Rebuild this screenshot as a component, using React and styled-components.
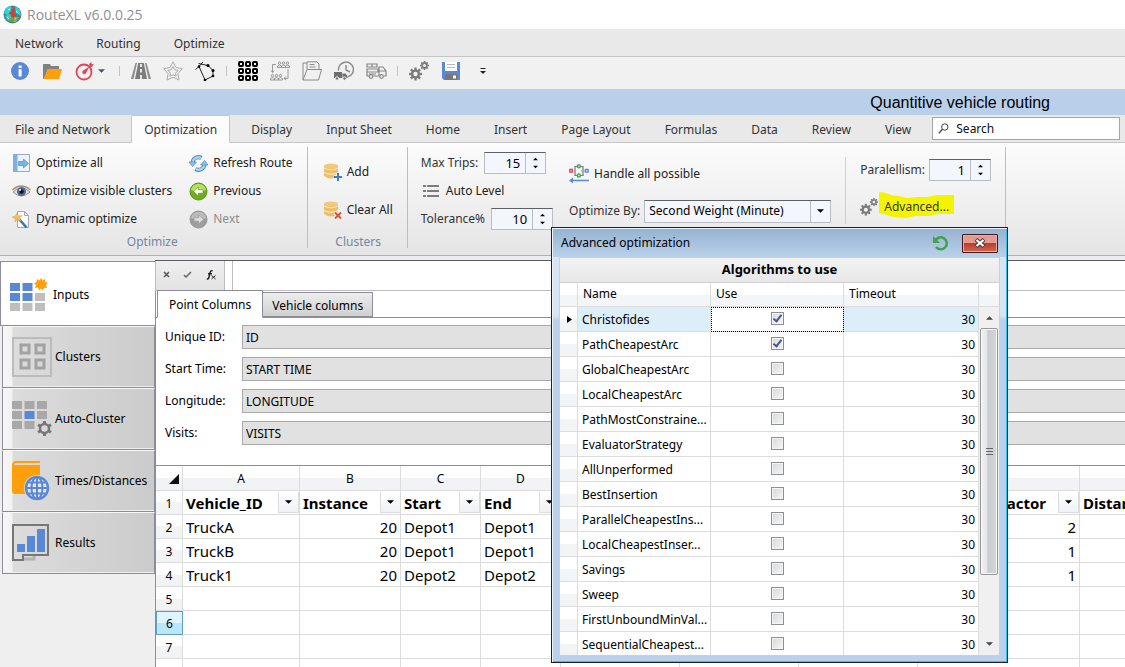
import React from "react";
import styled, { createGlobalStyle, css } from "styled-components";

const uiFont = `"Noto Sans", "DejaVu Sans", sans-serif`;
const line = "#8b8e98";

const GlobalStyle = createGlobalStyle`
  *, *::before, *::after { box-sizing: border-box; }
  html, body, #root { height: 100%; }
  body { margin: 0; background: #efefef; font: 12px/16px ${uiFont}; color: #000; overflow: hidden; }
  button, input, select { font: inherit; color: inherit; margin: 0; }
  button { background: none; border: 0; padding: 0; cursor: default; }
  svg { display: block; flex: none; }
`;

/* ---------- window frame ---------- */
const Window = styled.div`
  position: relative;
  display: flex;
  flex-direction: column;
  height: 100vh;
  overflow: hidden;
`;
const TitleBar = styled.header`
  display: flex;
  align-items: center;
  gap: 5px;
  flex: none;
  height: 29px;
  padding-left: 3px;
  background: #fff;
`;
const AppTitle = styled.h1`
  margin: 0;
  font: 14px/20px "Open Sans", "Noto Sans", sans-serif;
  color: #8f8f8f;
`;
const MenuBar = styled.nav`
  display: flex;
  align-items: center;
  gap: 33px;
  flex: none;
  height: 28px;
  padding: 2px 0 0 15px;
  background: #e9e9e9;
  border-bottom: 1px solid #c6c6c6;
  color: #333;
`;
const QuickBar = styled.div`
  display: flex;
  align-items: center;
  flex: none;
  height: 32px;
  padding-left: 4px;
  padding-bottom: 4px;
  background: #f1f1f1;
`;
const QuickButton = styled.button`
  display: flex;
  align-items: center;
  justify-content: ${(p) => (p.$wide ? "flex-start" : "center")};
  gap: 3px;
  width: ${(p) => (p.$wide ? 46 : 32)}px;
  height: 28px;
  padding-left: ${(p) => (p.$wide ? 7 : 0)}px;
`;
const QuickDivider = styled.i`
  width: 1px;
  height: 10px;
  margin: 0 5px;
  background: #c2c2c2;
`;
const Banner = styled.div`
  flex: none;
  display: flex;
  justify-content: flex-end;
  height: 26px;
  padding-right: 75px;
  background: #b9cfea;
  font: 16px/27px "Liberation Sans", Arial, sans-serif;
`;

/* ---------- ribbon ---------- */
const TabStrip = styled.nav`
  display: flex;
  align-items: stretch;
  gap: 8px;
  flex: none;
  height: 28px;
  padding: 0 5px 0 2px;
  background: #e9e9e9;
  border-bottom: 1px solid #c6c6c6;
`;
const RibbonTab = styled.button`
  flex: none;
  height: 28px;
  padding: 2px 12px 0;
  border: 1px solid transparent;
  white-space: nowrap;
  color: #333;
  ${(p) => p.$active && css`
    background: #fcfcfc;
    border-color: #c6c6c6;
    border-bottom-color: #fcfcfc;
    border-radius: 2px 2px 0 0;
  `}
`;
const SearchBox = styled.label`
  display: flex;
  align-items: center;
  gap: 7px;
  flex: 1 1 0;
  min-width: 0;
  height: 23px;
  margin-top: 2px;
  padding-left: 5px;
  background: #fff;
  border: 1px solid #a5a5a5;
  input {
    flex: 1 1 0;
    width: 0;
    min-width: 0;
    padding: 0;
    border: 0;
    outline: 0;
    background: none;
  }
  input::placeholder { color: #111; opacity: 1; }
`;
const Ribbon = styled.section`
  display: flex;
  flex: none;
  height: 113px;
  padding-top: 4px;
  background: linear-gradient(#fcfcfc, #e5e5e5);
  border-bottom: 1px solid #b0b0b0;
`;
const RibbonEdge = styled.div`
  flex: none;
  height: 4px;
  background: #ececec;
`;
const Group = styled.div`
  display: flex;
  flex-direction: column;
  height: 101px;
  padding: 2px 14px 0 ${(p) => p.$left || 12}px;
  border-right: 1px solid #bdbdbd;
`;
const GroupBody = styled.div`
  display: flex;
  flex: 1;
  gap: 17px;
`;
const GroupCaption = styled.div`
  height: 15px;
  text-align: center;
  line-height: 17px;
  color: #7486a4;
`;
const Stack = styled.div`
  display: flex;
  flex-direction: column;
  align-items: flex-start;
  gap: ${(p) => p.$gap || 0}px;
  padding-top: ${(p) => p.$top || 0}px;
`;
const Command = styled.button`
  display: flex;
  align-items: center;
  gap: 5px;
  height: 28px;
  color: #222;
  white-space: nowrap;
  &:disabled { color: #8b8b8b; }
`;
const Settings = styled.div`
  display: flex;
  align-items: flex-start;
  height: 101px;
  padding: 2px 14px 0 13px;
  border-right: 1px solid #bdbdbd;
`;
const SettingsSpace = styled.i`
  width: 16px;
`;
const SettingsDivider = styled.i`
  width: 1px;
  height: 67px;
  margin: 8px 14px 0;
  background: #cfcfcf;
`;
const Setting = styled.div`
  display: flex;
  align-items: center;
  gap: ${(p) => p.$gap || 4}px;
  height: 28px;
  white-space: nowrap;
  color: #333;
`;
const SpinBox = styled.span`
  display: flex;
  width: 62px;
  height: 22px;
  background: #f3f6fc;
  border: 1px solid #b9bcc4;
  border-top-color: #5f6066;
  input {
    width: 41px;
    padding: 0 5px;
    border: 0;
    border-right: 1px solid #b9bcc4;
    background: none;
    text-align: right;
    color: #000;
    outline: 0;
    appearance: textfield;
    font-size: 13px;
  }
  input::-webkit-inner-spin-button { appearance: none; }
`;
const SpinButtons = styled.span`
  display: flex;
  flex-direction: column;
  align-items: center;
  justify-content: space-evenly;
  flex: 1;
`;
const ComboBox = styled.span`
  display: flex;
  position: relative;
  width: 187px;
  height: 23px;
  background: #f3f6fc;
  border: 1px solid #b9bcc4;
  border-top-color: #5f6066;
  select {
    appearance: none;
    flex: 1;
    padding: 0 24px 0 4px;
    border: 0;
    background: none;
    color: #000;
    outline: 0;
  }
`;
const ComboArrow = styled.span`
  position: absolute;
  top: 0;
  right: 0;
  bottom: 0;
  display: flex;
  align-items: center;
  justify-content: center;
  width: 20px;
  border-left: 1px solid #b9bcc4;
  pointer-events: none;
`;
const Highlight = styled.span`
  position: relative;
  padding: 0 5px;
  margin-left: -3px;
  svg { position: absolute; left: 0; top: -7px; z-index: 0; }
  b { position: relative; font-weight: 400; }
`;

/* ---------- work area ---------- */
const Body = styled.div`
  display: flex;
  flex: 1;
  min-height: 0;
  background: #efefef;
`;
const SideBar = styled.nav`
  flex: none;
  display: flex;
  flex-direction: column;
  width: 155px;
  padding-top: 1px;
`;
const SideTab = styled.button`
  display: flex;
  align-items: center;
  gap: 3px;
  height: 62px;
  margin-left: 2px;
  padding-left: 9px;
  text-align: left;
  white-space: nowrap;
  border: 1px solid ${line};
  border-top-color: #f8f8f8;
  background: linear-gradient(90deg, #f6f6f6 0, #f2f2f2 9px, #dcdcdc 10px, #cbcbcb 100%);
  box-shadow: inset 0 -1px #eee;
  ${(p) => p.$active && css`
    height: 65px;
    margin-left: 0;
    gap: 5px;
    padding-top: 2px;
    background: #fff;
    border-color: ${line};
    border-right: 0;
    box-shadow: none;
  `}
`;
const Main = styled.main`
  display: flex;
  flex-direction: column;
  flex: 1;
  min-width: 0;
  background: #fff;
  border-top: 1px solid #5a5b62;
`;
const FormulaRow = styled.div`
  display: flex;
  flex: none;
  gap: 7px;
  height: 30px;
`;
const FormulaButtons = styled.div`
  display: flex;
  align-items: center;
  justify-content: space-around;
  width: 70px;
  padding-bottom: 2px;
  border: 1px solid #bcbcc0;
  border-top: 0;
  background: linear-gradient(#efefef, #e3e3e3);
`;
const FormulaInput = styled.input`
  flex: 1;
  border: 1px solid #bcbcc0;
  border-width: 0 0 1px 1px;
  outline: 0;
`;
const SheetTabs = styled.div`
  display: flex;
  align-items: flex-end;
  flex: none;
  height: 27px;
  padding-left: 1px;
  border-bottom: 1px solid ${line};
  border-left: 1px solid ${line};
`;
const SheetTab = styled.button`
  height: 25px;
  padding: 2px 9px 0;
  white-space: nowrap;
  border: 1px solid ${line};
  border-left: 0;
  background: linear-gradient(#ededed, #d0d0d0);
  ${(p) => p.$active && css`
    height: 28px;
    padding: 1px 11px 0;
    margin-bottom: -1px;
    border-left: 1px solid ${line};
    border-bottom-color: #fff;
    background: #fff;
  `}
`;
const FieldPanel = styled.div`
  display: flex;
  flex-direction: column;
  gap: 8px;
  flex: none;
  height: 148px;
  padding: 7px 0 0 9px;
  border-left: 1px solid ${line};
  border-bottom: 1px solid ${line};
`;
const Field = styled.label`
  display: grid;
  grid-template-columns: 77px 1fr;
  height: 24px;
  line-height: 24px;
  input {
    min-width: 0;
    height: 24px;
    padding: 1px 3px 0;
    background: #e1e1e1;
    border: 1px solid #a9a9a9;
    border-right: 0;
    outline: 0;
  }
`;
const SheetView = styled.div`
  flex: 1;
  min-height: 0;
  overflow: hidden;
  border-left: 1px solid ${line};
`;
const Sheet = styled.table`
  width: 1084px;
  table-layout: fixed;
  border-collapse: separate;
  border-spacing: 0;
  th, td {
    height: 24px;
    padding: 0 3px;
    border-right: 1px solid #dcdcdc;
    border-bottom: 1px solid #dcdcdc;
    white-space: nowrap;
    overflow: hidden;
  }
  td { font-size: 15px; line-height: 20px; }
  th { padding-top: 2px; font-weight: 400; text-align: center; background: linear-gradient(#fff 50%, #f2f3f5 50%); }
  thead th { height: 25px; }
`;
const RowHead = styled.th`
  ${(p) => p.$selected && css`
    &&& {
      background: linear-gradient(#dff4fd 50%, #b9e6fb 50%);
      border: 1px solid #5f9fb8;
    }
  `}
`;
const Cell = styled.td`
  text-align: ${(p) => (p.$number ? "right" : "left")};
`;
const FilterHead = styled.div`
  display: flex;
  align-items: center;
  justify-content: ${(p) => (p.$end ? "flex-end" : "space-between")};
  gap: 12px;
  margin-right: -3px;
  font-weight: 700;
  button {
    display: flex;
    flex: none;
    align-items: center;
    justify-content: center;
    width: 21px;
    height: 21px;
    background: linear-gradient(#fff, #f0f1f4);
    border: 1px solid #dcdcdc;
    border-top: 0;
  }
`;

/* ---------- dialog ---------- */
const Dialog = styled.section`
  position: absolute;
  left: 551px;
  top: 227px;
  display: flex;
  flex-direction: column;
  width: 457px;
  height: 436px;
  padding: 0 7px 6px 6px;
  border: 1px solid #1d2226;
  background: linear-gradient(#d6e4f4 0, #d6e4f4 88px, #b9d1ea 92px);
  box-shadow: inset 1px 1px #eaf3fb, inset -1px -1px #2cc3ea;
`;
const DialogTitle = styled.header`
  display: flex;
  align-items: center;
  flex: none;
  height: 28px;
  margin: 1px -6px 0 -5px;
  padding: 0 8px 0 8px;
  background: linear-gradient(#96b3d2, #b9d1ea);
  h2 { flex: 1; margin: 0; font-size: 12px; font-weight: 400; }
`;
const CloseButton = styled.button`
  display: flex;
  align-items: center;
  justify-content: center;
  width: 36px;
  height: 19px;
  margin-left: 14px;
  border: 1px solid #43191c;
  border-radius: 1px;
  box-shadow: inset 0 0 0 1px #e9aca2;
  background: linear-gradient(#e39c92 0 45%, #b8392a 46%, #cf6a55);
`;
const DialogBody = styled.div`
  display: flex;
  flex-direction: column;
  flex: 1;
  min-height: 0;
  margin-left: 1px;
  background: #fff;
  border: 1px solid #cfcfcf;
`;
const Caption = styled.h3`
  flex: none;
  height: 25px;
  margin: 0;
  border-bottom: 1px solid #d0d0d0;
  background: linear-gradient(#f2f2f2, #e8e8e8);
  text-align: center;
  font: 700 13px/23px ${uiFont};
`;
const ListArea = styled.div`
  display: flex;
  flex: 1;
  min-height: 0;
`;
const ListClip = styled.div`
  flex: 1;
  min-width: 0;
  overflow: hidden;
`;
const List = styled.table`
  width: 100%;
  table-layout: fixed;
  border-collapse: separate;
  border-spacing: 0;
  th, td {
    height: 25px;
    padding: 1px 3px 0 4px;
    border-right: 1px solid #dcdcdc;
    border-bottom: 1px solid #dcdcdc;
    font-weight: 400;
    text-align: left;
    white-space: nowrap;
    overflow: hidden;
  }
  th { height: 24px; padding: 0 5px 2px; background: linear-gradient(#fff 50%, #f4f5f7 50%); }
  td:first-child { padding: 0 0 0 7px; background: linear-gradient(#fff 50%, #f3f4f6 50%); }
  td:nth-child(2) { padding-right: 0; }
  td:nth-child(3) { text-align: center; padding: 0 0 1px; }
  td:last-child { text-align: right; }
`;
const AlgorithmRow = styled.tr`
  ${(p) => p.$current && css`
    td:nth-child(2), td:nth-child(4) { background: #dceef8; }
    td:nth-child(3) { outline: 1px dotted #000; outline-offset: -1px; }
  `}
`;
const Tick = styled.input`
  appearance: none;
  display: block;
  width: 13px;
  height: 13px;
  margin: 0 auto !important;
  border: 1px solid #8e8f8f;
  background: linear-gradient(135deg, #d4d7da, #f6f6f6);
  box-shadow: inset 0 0 0 1px #f4f4f4;
  &:checked::after {
    content: "";
    display: block;
    width: 5px;
    height: 9px;
    margin: 0 0 0 3px;
    border: solid #3f579b;
    border-width: 0 2px 2px 0;
    transform: rotate(38deg);
  }
`;
const ScrollBar = styled.div`
  display: flex;
  flex-direction: column;
  align-items: center;
  flex: none;
  width: 20px;
  padding-bottom: 1px;
  background: #f0f0f0;
`;
const ScrollHead = styled.div`
  flex: none;
  width: 20px;
  height: 24px;
  border-bottom: 1px solid #dcdcdc;
  background: linear-gradient(#fff 50%, #f4f5f7 50%);
`;
const ScrollButton = styled.button`
  display: flex;
  align-items: center;
  justify-content: center;
  width: 18px;
  height: 21px;
`;
const Thumb = styled.div`
  display: flex;
  align-items: center;
  justify-content: center;
  width: 18px;
  height: 247px;
  margin-bottom: auto;
  border: 1px solid #979797;
  border-radius: 2px;
  box-shadow: inset 0 0 0 1px #f6f6f6;
  background: linear-gradient(90deg, #f3f3f3, #e3e4e6 40%, #c9cbcf 41%, #d4d5d9);
`;

/* ---------- drawings ---------- */
const Svg = ({ w = 20, h = w, box, children, ...rest }) => (
  <svg width={w} height={h} viewBox={box || `0 0 ${w} ${h}`} fill="none" aria-hidden="true" {...rest}>{children}</svg>
);
const Triangle = ({ up, w = 7, color = "#000" }) => (
  <Svg w={w} h={4} box="0 0 8 4"><path d={up ? "M0 4L4 0L8 4Z" : "M0 0L4 4L8 0Z"} fill={color} /></Svg>
);
const AppIcon = () => (
  <Svg w={19}>
    <circle cx="9.5" cy="9.5" r="9" fill="#557f87" />
    <path d="M3 3L8 1L9 6L4 10L1 8ZM12 1L17 5L18 11L13 8Z" fill="#27d7dc" />
    <path d="M2 11L7 9L9 15L5 16ZM12 12L16 12L13 17L10 17Z" fill="#30d0d6" />
    <path d="M9 3L12 4L11 7L13 11L10 13L8 9L6 8L8 6Z" fill="#df3b2d" />
    <path d="M6 14L9 12L12 14L15 11L16 13L12 16L8 17Z" fill="#6ca441" />
    <path d="M11 12L14 13L12 16Z" fill="#e9b62c" />
    <path d="M5 5l2-1M13 6l2 2M4 12l2 2" stroke="#e8f6f6" />
  </Svg>
);
const InfoIcon = () => (
  <Svg w={20}><circle cx="10" cy="10" r="9" fill="#5989d6" /><path d="M8.6 4.5h3v2.4h-3zM8.6 8.3h3v7.2h-3z" fill="#fff" /></Svg>
);
const FolderIcon = () => (
  <Svg w={20}><path d="M1 18V3h7l1 2h8v3H6L2 18Z" fill="#818181" /><path d="M6 8h14l-3 10H1.500Z" fill="#ff9f0c" /></Svg>
);
const GaugeIcon = () => (
  <Svg w={20}>
    <circle cx="9" cy="11" r="7.500" stroke="#e24558" strokeWidth="1.800" />
    <path d="M14.500 5.500L10.800 12.500A2 2 0 0 1 7.800 9.800Z" fill="#e24558" />
    <path d="M14 3l2.500-2v2h2l-1.500 3h-2z" fill="#e24558" />
  </Svg>
);
const RoadIcon = () => (
  <Svg w={20}>
    <path d="M4.500 2h1.500L2.500 18H0ZM15.500 2h-1.500L17.500 18H20Z" fill="#8c8c8c" />
    <path d="M7.200 2h5.600l3.200 16H4Z" fill="#7c7c7c" />
    <path d="M10 3v3M10 8v3.500M10 14v4" stroke="#f1f1f1" strokeWidth="1.800" />
  </Svg>
);
const StarIcon = () => (
  <Svg w={20} stroke="#ababab" strokeLinejoin="round">
    <path d="M10 .8L13 6.500L19.400 7.700L15 12.400L15.900 19L10 16.200L4.100 19L5 12.400L.6 7.700L7 6.500Z" />
    <path d="M10 5.500L11.700 8.800L15.200 9.400L12.600 12L13.100 15.200L10 13.700L6.900 15.200L7.400 12L4.800 9.400L8.300 8.800Z" />
  </Svg>
);
const PolygonIcon = () => (
  <Svg w={20}>
    <path d="M.5 8.500L4 5.500L8 1M3.500 2.500L13 4.500L18 9.500L18 15L10 19L4 5.500" stroke="#222" />
    <g fill="#000"><circle cx="4" cy="5.500" r="1.300" /><circle cx="13" cy="4.500" r="1.500" /><circle cx="18" cy="9.500" r="1.500" /><circle cx="18" cy="15" r="1.300" /><circle cx="10" cy="19" r="1.300" /></g>
  </Svg>
);
const DotGridIcon = () => (
  <Svg w={20}>
    {[3, 10, 17].map((y) => [3, 10, 17].map((x) => <rect key={`${x}-${y}`} x={x - 2} y={y - 2} width="4" height="4" rx="1" stroke="#000" strokeWidth="2" />))}
  </Svg>
);
const Person = ({ x, y }) => (
  <g transform={`translate(${x} ${y})`}><circle cx="2" cy="1.600" r="1.200" /><path d="M0 6V4.500Q2 2.500 4 4.500V6Z" /></g>
);
const PeopleIcon = () => (
  <Svg w={20} stroke="#858585" strokeWidth=".8">
    <Person x={7.500} y={0.5} /><Person x={11.500} y={0.5} /><Person x={15.500} y={0.5} />
    <Person x={0.500} y={13} /><Person x={4.500} y={13} /><Person x={8.500} y={13} />
    <path d="M6 3.500H2.500v8M1 9.500l1.500 2L4 9.500M18 8v9.500H14M16 15.500L14 17.500l2 1.500" />
  </Svg>
);
const OpenFolderIcon = () => (
  <Svg w={20} stroke="#8a8a8a"><path d="M1 19V2h4V.8h10L17 3v5M1 19L5 8.500h14.500l-3 10.500ZM5 8.500V2M7.500 3.500h5M7.500 6h6" /></Svg>
);
const ClockTruckIcon = () => (
  <Svg w={20}>
    <path d="M4.500 9.500A7.500 7.500 0 1 1 14 15.800" stroke="#8c8c8c" strokeWidth="1.500" />
    <path d="M12 4v5l4 2" stroke="#8c8c8c" strokeWidth="1.400" />
    <path d="M0 11h8v6H0ZM8.500 12.500h3l2 2.500v2h-5Z" fill="#6e6e6e" />
    <circle cx="3" cy="17.500" r="1.700" fill="#6e6e6e" stroke="#f1f1f1" /><circle cx="10.500" cy="17.500" r="1.700" fill="#6e6e6e" stroke="#f1f1f1" />
  </Svg>
);
const TruckIcon = () => (
  <Svg w={21} h={18} stroke="#868686" strokeWidth="1.200">
    <path d="M1 2h5v3H1ZM6 2h5v3H6ZM1 7h11v3H1ZM1 10v4h2M7 14h6V5h4l3 4v5h-2M13 9h7M3 12h7" />
    <circle cx="5" cy="14.500" r="1.800" /><circle cx="15.500" cy="14.500" r="1.800" />
  </Svg>
);
const Cog = ({ x, y, r, color = "#7b7b7b", hole = "#f1f1f1" }) => (
  <g transform={`translate(${x} ${y})`}>
    {[0, 45, 90, 135].map((a) => <rect key={a} x={-r * 0.18} y={-r} width={r * 0.36} height={r * 2} fill={color} transform={`rotate(${a})`} />)}
    <circle r={r * 0.7} fill={color} /><circle r={r * 0.34} fill={hole} />
  </g>
);
const GearsIcon = ({ w = 20 }) => (
  <Svg w={w} box="0 0 20 20"><Cog x={6.5} y={13} r={6.5} /><Cog x={15.500} y={4.500} r={4.500} /></Svg>
);
const SaveIcon = () => (
  <Svg w={20}>
    <path d="M1 1h18v18H3l-2-2Z" fill="#5989d6" /><path d="M4 1h12v9H4Z" fill="#fff" />
    <path d="M6 3.500h8M6 6.500h8" stroke="#b8b8b8" /><path d="M4 13h12v6H4Z" fill="#777" /><path d="M12 14.500h3v3h-3Z" fill="#fff" />
  </Svg>
);
const MoreIcon = () => (<Svg w={8} h={8}><path d="M1.500 1.500h5" stroke="#222" /><path d="M1 4h6L4 7Z" fill="#222" /></Svg>);
const SearchIcon = () => (
  <Svg w={11}><circle cx="6.800" cy="4" r="3.200" stroke="#444" /><path d="M4.500 6.300L.8 10.200" stroke="#444" strokeWidth="1.300" /></Svg>
);
const OptimizeAllIcon = () => (
  <Svg w={19}><path d="M1.500 .5h16v17h-16Z" fill="#eef4fb" stroke="#94acc8" /><path d="M1 0h4.500v18H1Z" fill="#7fb0de" /><path d="M6.500 7.500h5V5l5 4.500l-5 4.500v-2.500h-5Z" fill="#75b4e4" stroke="#4785b8" strokeWidth=".6" /></Svg>
);
const EyeIcon = () => (
  <Svg w={19}><path d="M1 10Q9 2 18 10Q9 18 1 10Z" fill="#d9dfe8" stroke="#a49084" /><path d="M.5 8Q9 0 18.500 8" stroke="#a58c7c" strokeWidth="1.400" /><circle cx="9.500" cy="9.500" r="4.500" fill="#506b91" /><circle cx="9.500" cy="9.500" r="2.200" fill="#101820" /><circle cx="8" cy="8" r="1" fill="#fff" /></Svg>
);
const WandIcon = () => (
  <Svg w={19}><path d="M5.500 1.500h7l4 4v12h-11Z" fill="#fbfbfb" stroke="#a8a8a8" /><path d="M12.500 1.500v4h4" stroke="#a8a8a8" /><path d="M7 9l7.500 8.500" stroke="#3e73b5" strokeWidth="2.600" /><path d="M5 3l1.300 3L10 5.500L7.500 8L9 11L5.500 9.500L3 12V8.500L0 7l3.500-1Z" fill="#f7bd5a" stroke="#dca04a" strokeWidth=".5" /></Svg>
);
const RefreshRouteIcon = () => (
  <Svg w={19}>
    <path d="M3.500 8.500a6 6 0 0 1 9-4.500" stroke="#4b88bd" strokeWidth="4" /><path d="M3.500 8a6 6 0 0 1 8.600-4" stroke="#acd4ef" strokeWidth="2.400" />
    <path d="M15.500 10.500a6 6 0 0 1-9 4.500" stroke="#4b88bd" strokeWidth="4" /><path d="M15.500 11a6 6 0 0 1-8.600 4" stroke="#acd4ef" strokeWidth="2.400" />
    <path d="M0 8h7.500L3.500 12.500ZM11.500 11L15.500 6.500L19 11Z" fill="#93c3e6" stroke="#4b88bd" strokeWidth=".7" />
  </Svg>
);
const ArrowBall = ({ flip, a, b, edge, arrow }) => (
  <Svg w={19}>
    <circle cx="9.500" cy="9.500" r="8.500" fill={b} stroke={edge} /><path d="M2 8a7.600 7.600 0 0 1 15 0Q9 11 2 8Z" fill={a} />
    <path d="M4.500 9.500L9.500 5v2.800H14v3.400H9.500V14Z" fill={arrow} stroke={edge} strokeWidth=".6" transform={flip ? "rotate(180 9.500 9.500)" : undefined} />
  </Svg>
);
const DatabaseIcon = ({ remove }) => (
  <Svg w={18}>
    <path d="M0 3Q7 0 14 3v10Q7 18 0 13Z" fill="#eebf69" /><ellipse cx="7" cy="3" rx="7" ry="2.500" fill="#f3c978" />
    <path d="M0 5Q7 8.500 14 5M0 9.500Q7 13 14 9.500" stroke="#fbf6ea" strokeWidth=".8" />
    <path d={remove ? "M11 11.500l6 6M17 11.500l-6 6" : "M14 10v8M10 14h8"} stroke="#f7f7f7" strokeWidth="4" />
    <path d={remove ? "M11 11.500l6 6M17 11.500l-6 6" : "M14 10v8M10 14h8"} stroke={remove ? "#d0563c" : "#3d7fbe"} strokeWidth="2" />
  </Svg>
);
const LevelsIcon = () => (
  <Svg w={20} h={14}><path d="M2 2h3M2 7h3M2 12h3M6 2h12M6 7h12M6 12h12" stroke="#7d7d7d" strokeWidth="2" /></Svg>
);
const FlowIcon = () => (
  <Svg w={20}>
    <path d="M8.500 2.500H6v9h2.500M11 2.500h3v9h-3" stroke="#777" strokeWidth="1.200" />
    <path d="M.8 5.500h2.600v2.600H.8Z" stroke="#dc3f54" strokeWidth="1.300" /><path d="M16.500 5.500h2.600v2.600h-2.600Z" stroke="#5b89d3" strokeWidth="1.300" />
    <circle cx="9.800" cy="2.300" r="1.500" fill="#f6f6f6" stroke="#39a852" strokeWidth="1.400" /><circle cx="9.800" cy="11.500" r="1.500" fill="#f6f6f6" stroke="#39a852" strokeWidth="1.400" />
    <path d="M12 7l2-3l2 3l-2 3Z" fill="#aaa" /><path d="M3 16.500h17" stroke="#5b89d3" strokeWidth="1.500" /><path d="M0 16.500l4-3v6Z" fill="#5b89d3" />
  </Svg>
);
const MarkerStroke = () => (
  <Svg w={76} h={27}><path d="M0 0L7 1L12 3L20 4L28 6L38 5L48 5L58 3L75 3V22L58 22L51 24L36 24L27 26L14 25L5 22L0 21Z" fill="#f4f400" /></Svg>
);
const Tiles = ({ at, fill, size = [10, 8], step = [12.5, 10] }) => at.map(([c, r]) => (
  <rect key={`${c}${r}`} x={c * step[0]} y={r * step[1]} width={size[0]} height={size[1]} fill={fill} />
));
const InputsIcon = () => (
  <Svg w={38} h={34}>
    <g transform="translate(0 5)"><Tiles at={[[0, 0], [1, 0], [0, 1], [1, 1]]} fill="#5989d6" /><Tiles at={[[2, 1], [0, 2], [1, 2], [2, 2]]} fill="#bebebe" /></g>
    <path d="M31 0l1.500 2.500L35 1l.2 3L38 5l-2 2l1 3l-3-.3L33 12.500l-2-2-2 2-1-3-3 .5l1-3-2-1.500 2.500-1.500L27 1l2.500 1.500Z" fill="#ff9f0c" />
  </Svg>
);
const ClustersIcon = () => (
  <Svg w={40}>
    <path d="M1 1h38v38H1Z" stroke="#bcbcbc" strokeWidth="2" />
    {[[9, 8], [24, 8], [9, 23], [24, 23]].map(([x, y]) => <path key={`${x}${y}`} d={`M${x} ${y}h8v8h-8Z`} stroke="#a2a2a2" strokeWidth="3" />)}
  </Svg>
);
const AutoClusterIcon = () => (
  <Svg w={40} h={36}>
    <Tiles at={[[0, 0], [1, 0], [2, 0], [0, 1], [2, 1], [0, 2], [1, 2]]} fill="#a8a8a8" /><Tiles at={[[1, 1]]} fill="#5989d6" />
    <g transform="translate(32.500 27.500)"><circle r="4.500" stroke="#777" strokeWidth="2.500" />{[0, 60, 120].map((a) => <path key={a} d="M0 -7.500V-5M0 5V7.500" stroke="#777" strokeWidth="3" transform={`rotate(${a})`} />)}</g>
  </Svg>
);
const TimesIcon = () => (
  <Svg w={40} h={40}>
    <path d="M0 4Q0 0 4 0H28V2H4Q2 2 2 4H28V33H3Q0 33 0 30Z" fill="#ff9f0c" />
    <circle cx="25" cy="27" r="13" fill="#dcdcdc" /><circle cx="25" cy="27" r="11" fill="#e6e6e6" stroke="#5989d6" strokeWidth="2.500" />
    <ellipse cx="25" cy="27" rx="5.500" ry="11" stroke="#5989d6" strokeWidth="2" /><path d="M25 16v22M14 27h22M16 21.500h18M16 32.500h18" stroke="#5989d6" strokeWidth="2" />
  </Svg>
);
const ResultsIcon = () => (
  <Svg w={40} h={38}>
    <path d="M12 35h10v-3" stroke="#b4b4b4" strokeWidth="3" /><path d="M1 1h35v30H11v5H1Z" stroke="#777" strokeWidth="2" />
    <path d="M5 20h8v8H5ZM15 12h8v16h-8ZM25 5h8v23h-8Z" fill="#5989d6" />
  </Svg>
);
const ResetIcon = () => (
  <Svg w={16}><path d="M3 6.500A6 6 0 1 1 4 12" stroke="#3ea34c" strokeWidth="2.500" /><path d="M1 1v7h7Z" fill="#3ea34c" /></Svg>
);

/* ---------- content ---------- */
const ribbonTabs = ["File and Network", "Optimization", "Display", "Input Sheet", "Home", "Insert", "Page Layout", "Formulas", "Data", "Review", "View"];
const fields = [["Unique ID:", "ID"], ["Start Time:", "START TIME"], ["Longitude:", "LONGITUDE"], ["Visits:", "VISITS"]];
const columns = [
  { letter: "A", width: 117, title: "Vehicle_ID", values: ["TruckA", "TruckB", "Truck1"] },
  { letter: "B", width: 101, title: "Instance", number: true, values: [20, 20, 20] },
  { letter: "C", width: 80, title: "Start", values: ["Depot1", "Depot1", "Depot2"] },
  { letter: "D", width: 80, title: "End", values: ["Depot1", "Depot1", "Depot2"] },
  { width: 119, values: [] },
  { width: 119, values: [] },
  { width: 119, values: [] },
  { width: 162, title: "Factor", end: true, number: true, values: [2, 1, 1] },
  { width: 160, title: "Distance", values: [] },
];
const algorithms = ["Christofides", "PathCheapestArc", "GlobalCheapestArc", "LocalCheapestArc", "PathMostConstraine...", "EvaluatorStrategy", "AllUnperformed", "BestInsertion", "ParallelCheapestIns...", "LocalCheapestInser...", "Savings", "Sweep", "FirstUnboundMinVal...", "SequentialCheapest..."];

const Spin = ({ id, value }) => (
  <SpinBox>
    <input id={id} type="number" defaultValue={value} />
    <SpinButtons><button aria-label="Increase"><Triangle up w={5} /></button><button aria-label="Decrease"><Triangle w={5} /></button></SpinButtons>
  </SpinBox>
);

function AdvancedDialog() {
  return (
    <Dialog role="dialog" aria-labelledby="dialog-title">
      <DialogTitle>
        <h2 id="dialog-title">Advanced optimization</h2>
        <button aria-label="Reset"><ResetIcon /></button>
        <CloseButton aria-label="Close">
          <Svg w={12} h={10}><path d="M2 1.500L10 8.500M10 1.500L2 8.500" stroke="#4a3437" strokeWidth="4" /><path d="M2.500 2L9.500 8M9.500 2L2.500 8" stroke="#fff" strokeWidth="2.300" /></Svg>
        </CloseButton>
      </DialogTitle>
      <DialogBody>
        <Caption>Algorithms to use</Caption>
        <ListArea>
          <ListClip>
            <List>
              <colgroup><col style={{ width: 18 }} /><col style={{ width: 133 }} /><col style={{ width: 133 }} /><col /></colgroup>
              <thead><tr><th /><th>Name</th><th>Use</th><th>Timeout</th></tr></thead>
              <tbody>
                {algorithms.map((name, i) => (
                  <AlgorithmRow key={name} $current={i === 0}>
                    <td>{i === 0 && <Svg w={5} h={7}><path d="M0 0L5 3.500L0 7Z" fill="#000" /></Svg>}</td>
                    <td>{name}</td>
                    <td><Tick type="checkbox" aria-label={name} defaultChecked={i < 2} /></td>
                    <td>30</td>
                  </AlgorithmRow>
                ))}
              </tbody>
            </List>
          </ListClip>
          <ScrollBar>
            <ScrollHead />
            <ScrollButton aria-label="Scroll up"><Triangle up w={7} color="#444" /></ScrollButton>
            <Thumb><Svg w={7} h={9}><path d="M0 1.500h7M0 4.500h7M0 7.500h7" stroke="#666" /></Svg></Thumb>
            <ScrollButton aria-label="Scroll down"><Triangle w={7} color="#444" /></ScrollButton>
          </ScrollBar>
        </ListArea>
      </DialogBody>
    </Dialog>
  );
}

function Spreadsheet() {
  return (
    <SheetView>
      <Sheet>
        <colgroup><col style={{ width: 27 }} />{columns.map((c, i) => <col key={i} style={{ width: c.width }} />)}</colgroup>
        <thead>
          <tr>
            <th><Svg w={10} style={{ marginLeft: "auto" }}><path d="M10 0V10H0Z" fill="#111" /></Svg></th>
            {columns.map((c, i) => <th key={i}>{c.letter}</th>)}
          </tr>
        </thead>
        <tbody>
          <tr>
            <RowHead>1</RowHead>
            {columns.map((c, i) => (
              <Cell key={i}>
                {c.title && <FilterHead $end={c.end}>{c.title}<button aria-label={`Filter ${c.title}`}><Triangle /></button></FilterHead>}
              </Cell>
            ))}
          </tr>
          {[2, 3, 4, 5, 6, 7, null].map((row) => (
            <tr key={row ?? "last"}>
              <RowHead $selected={row === 6}>{row}</RowHead>
              {columns.map((c, i) => <Cell key={i} $number={c.number}>{row && c.values[row - 2]}</Cell>)}
            </tr>
          ))}
        </tbody>
      </Sheet>
    </SheetView>
  );
}

export default function App() {
  return (
    <Window>
      <GlobalStyle />
      <TitleBar><AppIcon /><AppTitle>RouteXL v6.0.0.25</AppTitle></TitleBar>
      <MenuBar><button>Network</button><button>Routing</button><button>Optimize</button></MenuBar>
      <QuickBar>
        <QuickButton aria-label="Info"><InfoIcon /></QuickButton>
        <QuickButton aria-label="Open"><FolderIcon /></QuickButton>
        <QuickButton aria-label="Speed" $wide><GaugeIcon /><Triangle color="#44546f" /></QuickButton>
        <QuickDivider />
        <QuickButton aria-label="Roads"><RoadIcon /></QuickButton>
        <QuickButton aria-label="Favourites"><StarIcon /></QuickButton>
        <QuickButton aria-label="Polygon"><PolygonIcon /></QuickButton>
        <QuickDivider />
        <QuickButton aria-label="Grid"><DotGridIcon /></QuickButton>
        <QuickButton aria-label="Groups"><PeopleIcon /></QuickButton>
        <QuickButton aria-label="Files"><OpenFolderIcon /></QuickButton>
        <QuickButton aria-label="Schedule"><ClockTruckIcon /></QuickButton>
        <QuickButton aria-label="Vehicles"><TruckIcon /></QuickButton>
        <QuickDivider />
        <QuickButton aria-label="Settings"><GearsIcon /></QuickButton>
        <QuickButton aria-label="Save"><SaveIcon /></QuickButton>
        <QuickButton aria-label="More"><MoreIcon /></QuickButton>
      </QuickBar>
      <Banner>Quantitive vehicle routing</Banner>
      <TabStrip>
        {ribbonTabs.map((t) => <RibbonTab key={t} $active={t === "Optimization"}>{t}</RibbonTab>)}
        <SearchBox><SearchIcon /><input aria-label="Search" placeholder="Search" /></SearchBox>
      </TabStrip>
      <Ribbon>
        <Group>
          <GroupBody>
            <Stack>
              <Command><OptimizeAllIcon />Optimize all</Command>
              <Command><EyeIcon />Optimize visible clusters</Command>
              <Command><WandIcon />Dynamic optimize</Command>
            </Stack>
            <Stack>
              <Command><RefreshRouteIcon />Refresh Route</Command>
              <Command><ArrowBall a="#b6e060" b="#6fae17" edge="#5d8f1d" arrow="#fff" />Previous</Command>
              <Command disabled><ArrowBall flip a="#bcbcbc" b="#9d9d9d" edge="#969696" arrow="#dedede" />Next</Command>
            </Stack>
          </GroupBody>
          <GroupCaption>Optimize</GroupCaption>
        </Group>
        <Group $left={16}>
          <GroupBody>
            <Stack $top={9} $gap={10}>
              <Command><DatabaseIcon />Add</Command>
              <Command><DatabaseIcon remove />Clear All</Command>
            </Stack>
          </GroupBody>
          <GroupCaption>Clusters</GroupCaption>
        </Group>
        <Settings>
          <Stack>
            <Setting $gap={6}><label htmlFor="trips">Max Trips:</label><Spin id="trips" value={15} /></Setting>
            <Command><LevelsIcon />Auto Level</Command>
            <Setting $gap={6}><label htmlFor="tolerance">Tolerance%</label><Spin id="tolerance" value={10} /></Setting>
          </Stack>
          <SettingsSpace />
          <Stack $top={11} $gap={9}>
            <Command><FlowIcon />Handle all possible</Command>
            <Setting>
              <label htmlFor="weight">Optimize By:</label>
              <ComboBox>
                <select id="weight" defaultValue="minute"><option value="minute">Second Weight (Minute)</option></select>
                <ComboArrow><Triangle /></ComboArrow>
              </ComboBox>
            </Setting>
          </Stack>
          <SettingsDivider />
          <Stack $top={7} $gap={9}>
            <Setting><label htmlFor="parallel">Paralellism:</label><Spin id="parallel" value={1} /></Setting>
            <Setting as="button"><GearsIcon w={18} /><Highlight><MarkerStroke /><b>Advanced...</b></Highlight></Setting>
          </Stack>
        </Settings>
      </Ribbon>
      <RibbonEdge />
      <Body>
        <SideBar>
          <SideTab $active><InputsIcon />Inputs</SideTab>
          <SideTab><ClustersIcon />Clusters</SideTab>
          <SideTab><AutoClusterIcon />Auto-Cluster</SideTab>
          <SideTab><TimesIcon />Times/Distances</SideTab>
          <SideTab><ResultsIcon />Results</SideTab>
        </SideBar>
        <Main>
          <FormulaRow>
            <FormulaButtons>
              <button aria-label="Cancel"><Svg w={7}><path d="M1 1l5 5M6 1L1 6" stroke="#555" strokeWidth="1.500" /></Svg></button>
              <button aria-label="Accept"><Svg w={9} h={7}><path d="M1 4l2 2L8 1" stroke="#666" strokeWidth="1.500" /></Svg></button>
              <button aria-label="Insert function"><Svg w={11} h={10}><path d="M6.500 1Q4.500 0 4 3L3 7Q2.500 9.500 .8 9M2 3.800h4" stroke="#222" strokeWidth="1.500" /><path d="M5.500 5.500l4 3.500M9.500 5.500l-4 3.500" stroke="#222" /></Svg></button>
            </FormulaButtons>
            <FormulaInput aria-label="Formula" />
          </FormulaRow>
          <SheetTabs><SheetTab $active>Point Columns</SheetTab><SheetTab>Vehicle columns</SheetTab></SheetTabs>
          <FieldPanel>
            {fields.map(([label, value]) => <Field key={label}>{label}<input readOnly value={value} /></Field>)}
          </FieldPanel>
          <Spreadsheet />
        </Main>
      </Body>
      <AdvancedDialog />
    </Window>
  );
}
